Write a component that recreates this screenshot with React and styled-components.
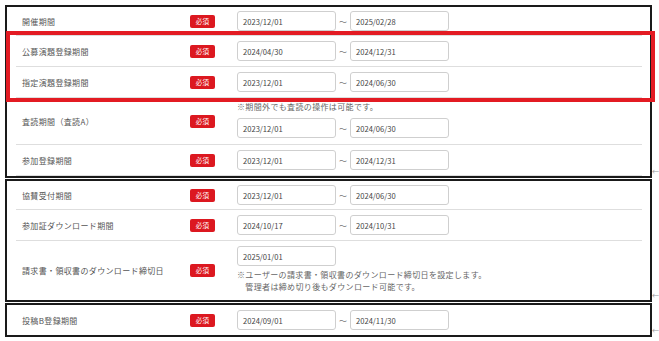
import styled, { createGlobalStyle } from "styled-components";

const GlobalStyle = createGlobalStyle`
  html, body {
    margin: 0;
    padding: 0;
    background: #fff;
  }
  body {
    font-family: "Noto Sans CJK JP", "Noto Sans", sans-serif;
    color: #555;
  }
`;

const Page = styled.div`
  display: flex;
  flex-direction: column;
  gap: 1px;
  padding: 5px 0 0 5px;
`;

const PanelLine = styled.div`
  display: flex;
  align-items: flex-end;
`;

const Panel = styled.div`
  position: relative;
  box-sizing: border-box;
  width: 651px;
  border: 2px solid #1a1a1a;
  padding: 0 8px 0 9px;
`;

const Mark = styled.span`
  font-size: 7px;
  line-height: 7px;
  color: #999;
  margin: 0 0 3px 0;
`;

const Row = styled.div`
  display: grid;
  grid-template-columns: 174px 47px 1fr;
  align-items: center;
  min-height: ${(p) => (p.$first ? 28 : 30)}px;
  border-bottom: 1px solid #dedede;

  &:last-child {
    border-bottom: none;
  }
`;

const Label = styled.div`
  padding-left: 6px;
  font-size: 8px;
  letter-spacing: 0.35px;
  color: #555;
`;

const BadgeCell = styled.div`
  display: flex;
  align-items: center;
`;

const Badge = styled.span`
  display: inline-flex;
  align-items: center;
  justify-content: center;
  width: 25px;
  height: 13px;
  border-radius: 2px;
  background: #dc1820;
  color: #fff;
  font-size: 6.5px;
  line-height: 7px;
  letter-spacing: 0.3px;
`;

const Field = styled.div`
  display: flex;
  flex-direction: column;
  padding: ${(p) => p.$pad || "0"};
`;

const Range = styled.div`
  display: flex;
  align-items: center;
  margin-top: ${(p) => p.$mt || 0}px;
`;

const DateBox = styled.div`
  box-sizing: border-box;
  width: 99px;
  height: 20px;
  border: 1px solid #cfcfcf;
  border-radius: 3px;
  padding-left: 5px;
  display: flex;
  align-items: center;
  font-size: 7.6px;
  color: #444;
  background: #fff;
`;

const Tilde = styled.span`
  width: 14px;
  text-align: center;
  font-size: 8px;
  color: #777;
`;

const Note = styled.div`
  font-family: "Noto Sans CJK JP", sans-serif;
  font-size: 8px;
  line-height: ${(p) => p.$lh || 12}px;
  letter-spacing: 0.35px;
  color: #666;
  margin-top: ${(p) => p.$mt || 0}px;
  white-space: pre;
`;

const Highlight = styled.div`
  position: absolute;
  left: -1px;
  top: 24px;
  width: 649px;
  height: 71px;
  box-sizing: border-box;
  border: 4px solid #e31b23;
  pointer-events: none;
`;

function DateRange({ from, to, mt }) {
  return (
    <Range $mt={mt}>
      <DateBox>{from}</DateBox>
      <Tilde>～</Tilde>
      <DateBox>{to}</DateBox>
    </Range>
  );
}

function Required() {
  return (
    <BadgeCell>
      <Badge>必須</Badge>
    </BadgeCell>
  );
}

function SimpleRow({ label, from, to, first }) {
  return (
    <Row $first={first}>
      <Label>{label}</Label>
      <Required />
      <DateRange from={from} to={to} />
    </Row>
  );
}

export default function App() {
  return (
    <>
      <GlobalStyle />
      <Page>
        <PanelLine>
          <Panel>
            <SimpleRow first label="開催期間" from="2023/12/01" to="2025/02/28" />
            <SimpleRow label="公募演題登録期間" from="2024/04/30" to="2024/12/31" />
            <SimpleRow label="指定演題登録期間" from="2023/12/01" to="2024/06/30" />
            <Row>
              <Label>査読期間（査読A）</Label>
              <Required />
              <Field $pad="2px 0 6px">
                <Note $lh={14}>{"※\uFE0E期間外でも査読の操作は可能です。"}</Note>
                <DateRange mt={4} from="2023/12/01" to="2024/06/30" />
              </Field>
            </Row>
            <SimpleRow label="参加登録期間" from="2023/12/01" to="2024/12/31" />
            <Highlight />
          </Panel>
          <Mark>←</Mark>
        </PanelLine>

        <PanelLine>
          <Panel>
            <SimpleRow first label="協賛受付期間" from="2023/12/01" to="2024/06/30" />
            <SimpleRow label="参加証ダウンロード期間" from="2024/10/17" to="2024/10/31" />
            <Row>
              <Label>請求書・領収書のダウンロード締切日</Label>
              <Required />
              <Field $pad="5px 0 7px">
                <DateBox>2025/01/01</DateBox>
                <Note $mt={3}>{"※\uFE0Eユーザーの請求書・領収書のダウンロード締切日を設定します。"}</Note>
                <Note>{"　管理者は締め切り後もダウンロード可能です。"}</Note>
              </Field>
            </Row>
          </Panel>
          <Mark>←</Mark>
        </PanelLine>

        <PanelLine>
          <Panel>
            <SimpleRow label="投稿B登録期間" from="2024/09/01" to="2024/11/30" />
          </Panel>
          <Mark>←</Mark>
        </PanelLine>
      </Page>
    </>
  );
}
